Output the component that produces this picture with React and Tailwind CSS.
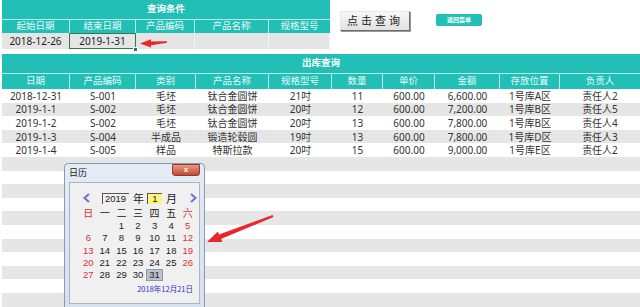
import React from "react";

const TEAL = "bg-[#21bfb6]";

const queryCols = [
  { label: "起始日期", w: "w-[68px]", value: "2018-12-26" },
  { label: "结束日期", w: "w-[66px]", value: "2019-1-31", selected: true },
  { label: "产品编码", w: "w-[59px]", value: "" },
  { label: "产品名称", w: "w-[74px]", value: "" },
  { label: "规格型号", w: "w-[61px]", value: "" },
];

const cols = [
  { label: "日期", w: "w-[68px]" },
  { label: "产品编码", w: "w-[66px]" },
  { label: "类别", w: "w-[60px]" },
  { label: "产品名称", w: "w-[73px]" },
  { label: "规格型号", w: "w-[63px]" },
  { label: "数量", w: "w-[51px]" },
  { label: "单价", w: "w-[52px]" },
  { label: "金额", w: "w-[65px]" },
  { label: "存放位置", w: "w-[60px]" },
  { label: "负责人", w: "w-[80px]" },
];

const rows = [
  ["2018-12-31", "S-001", "毛坯", "钛合金圆饼", "21吋", "11", "600.00", "6,600.00", "1号库A区", "责任人2"],
  ["2019-1-1", "S-002", "毛坯", "钛合金圆饼", "20吋", "12", "600.00", "7,200.00", "1号库B区", "责任人5"],
  ["2019-1-2", "S-002", "毛坯", "钛合金圆饼", "20吋", "13", "600.00", "7,800.00", "1号库B区", "责任人4"],
  ["2019-1-3", "S-004", "半成品", "锻造轮毂圆", "19吋", "13", "600.00", "7,800.00", "1号库D区", "责任人3"],
  ["2019-1-4", "S-005", "样品", "特斯拉款", "20吋", "15", "600.00", "9,000.00", "1号库E区", "责任人2"],
];

const emptyRows = Array.from({ length: 11 });

const weekdays = ["日", "一", "二", "三", "四", "五", "六"];
const days = [null, null, ...Array.from({ length: 31 }, (_, i) => i + 1)];

function Calendar() {
  return (
    <div className="absolute left-[64px] top-[163px] w-[141px] h-[146px] rounded-t-[4px] border border-[#8a9ab0] bg-gradient-to-b from-[#e4ecf5] to-[#d6e1ee]">
      <div className="absolute left-[4px] top-[4px] text-[9px] leading-[10px] text-[#222] font-['Noto_Sans_CJK_SC',sans-serif]">
        日历
      </div>
      <div className="absolute right-[4px] top-[0px] w-[28px] h-[12px] rounded-b-[3px] border border-[#8b3a2e] bg-gradient-to-b from-[#e49a88] to-[#c7452e] flex items-center justify-center text-white text-[8px] font-bold leading-none font-['Liberation_Sans',sans-serif]">
        x
      </div>
      <div className="absolute left-[4px] top-[18px] w-[131px] h-[122px] border border-[#a8b6c6] bg-[#f0f0f0]">
        {/* nav row */}
        <div className="flex items-center h-[12px] mt-[9px] text-[#222] font-['Liberation_Sans',sans-serif]">
          <svg className="ml-[13px]" width="7" height="10" viewBox="0 0 7 10">
            <polyline points="6,1 1.5,5 6,9" fill="none" stroke="#6b6fd6" strokeWidth="2" />
          </svg>
          <div className="ml-[12px] w-[27px] h-[11px] border-t border-l border-[#555] border-r-[#ddd] border-b-[#ddd] text-[9.5px] leading-[10px] pl-[2px]">
            2019
          </div>
          <div className="ml-[4px] text-[11px] leading-[12px] font-['Noto_Sans_CJK_SC',sans-serif]">年</div>
          <div className="ml-[3px] w-[15px] h-[11px] border-t border-l border-[#555] bg-[#fbf67a] text-[9.5px] leading-[10px] text-center">
            1
          </div>
          <div className="ml-[4px] text-[11px] leading-[12px] font-['Noto_Sans_CJK_SC',sans-serif]">月</div>
          <svg className="ml-[13px]" width="7" height="10" viewBox="0 0 7 10">
            <polyline points="1,1 5.5,5 1,9" fill="none" stroke="#6b6fd6" strokeWidth="2" />
          </svg>
        </div>
        {/* grid */}
        <div className="ml-[10px] mt-[3px] w-[116px] grid grid-cols-7">
          {weekdays.map((d, i) => (
            <div
              key={d}
              className={`h-[12.4px] flex items-center justify-center text-[10px] leading-none font-['Noto_Sans_CJK_SC',sans-serif] ${
                i === 0 || i === 6 ? "text-[#d8323a]" : "text-[#222]"
              }`}
            >
              {d}
            </div>
          ))}
          {days.map((d, i) => {
            const col = i % 7;
            const red = col === 0 || col === 6;
            return (
              <div
                key={i}
                className={`h-[12.4px] flex items-center justify-center text-[9.5px] leading-none font-['Liberation_Sans',sans-serif] ${
                  red ? "text-[#d8323a]" : "text-[#222]"
                } ${d === 31 ? "bg-[#b9c3cc] border border-[#8d9aa6]" : ""}`}
              >
                {d}
              </div>
            );
          })}
        </div>
        <div className="absolute right-[6px] top-[101px] text-[7.5px] leading-[9px] text-[#2b2bd0] font-['Noto_Sans_CJK_SC',sans-serif]">
          2018年12月21日
        </div>
      </div>
    </div>
  );
}

export default function App() {
  return (
    <div className="relative w-[640px] h-[307px] overflow-hidden bg-white pl-[2px] font-['Noto_Sans','Noto_Sans_CJK_SC',sans-serif] text-[#333]">
      {/* query area */}
      <div className="flex">
        <div className="w-[328px]">
          <div className={`${TEAL} h-[19px] flex items-center justify-center text-white text-[9.5px] font-bold`}>
            查询条件
          </div>
          <div className={`${TEAL} h-[14px] flex border-t border-white/70`}>
            {queryCols.map((c) => (
              <div
                key={c.label}
                className={`${c.w} h-full flex items-center justify-center text-[9.5px] text-[#eafaf8] border-r border-white/70 last:border-r-0`}
              >
                {c.label}
              </div>
            ))}
          </div>
          <div className="h-[16px] flex bg-[#e5e5e5]">
            {queryCols.map((c) => (
              <div
                key={c.label}
                className={`${c.w} relative h-full flex items-center justify-center text-[10px] text-[#222] border-r border-[#f3f3f3]`}
              >
                {c.value}
                {c.selected && (
                  <>
                    <div className="absolute left-[-1px] top-0 right-[-1px] bottom-0 border-[1.5px] border-[#2f7a4a]" />
                    <div className="absolute right-[-3px] bottom-[-3px] w-[5px] h-[5px] bg-[#2f7a4a] border border-white" />
                  </>
                )}
              </div>
            ))}
          </div>
        </div>
        <div className="ml-[10px] mt-[11px] w-[70px] h-[20px] border border-t-[#e8e8e8] border-l-[#e8e8e8] border-r-[#6d6d6d] border-b-[#6d6d6d] bg-gradient-to-b from-[#f7f7f7] to-[#e2e2e2] flex items-center justify-center text-[11px] tracking-[3px] text-[#222] shadow-[1px_1px_0_#9a9a9a]">
          点击查询
        </div>
        <div className={`ml-[26px] mt-[14px] w-[46px] h-[12px] rounded-[2px] ${TEAL} flex items-center justify-center text-white text-[6px] font-bold leading-none`}>
          返回菜单
        </div>
      </div>

      {/* main table */}
      <div className={`${TEAL} mt-[5px] h-[20px] flex items-center justify-center text-white text-[9.5px] font-bold border-b border-white/70`}>
        出库查询
      </div>
      <div className={`${TEAL} h-[15px] flex`}>
        {cols.map((c) => (
          <div
            key={c.label}
            className={`${c.w} h-full flex items-center justify-center text-[9.5px] text-[#eafaf8] border-r border-white/70 last:border-r-0`}
          >
            {c.label}
          </div>
        ))}
      </div>
      {rows.map((r, i) => (
        <div key={i} className={`h-[13.6px] flex ${i % 2 === 1 ? "bg-[#e6e6e6]" : "bg-white"}`}>
          {r.map((v, j) => (
            <div key={j} className={`${cols[j].w} h-full flex items-center justify-center text-[10px] leading-none`}>
              {v}
            </div>
          ))}
        </div>
      ))}
      {emptyRows.map((_, i) => (
        <div key={i} className={`h-[13.6px] ${(i + 5) % 2 === 1 ? "bg-[#e6e6e6]" : "bg-white"}`} />
      ))}

      <Calendar />

      {/* red arrows */}
      <svg className="absolute left-0 top-0 pointer-events-none" width="640" height="307">
        <polygon
          points="167,41.2 151,41.4 151,39.2 140,43.6 151,47.6 151,45.2 167,42.8"
          fill="#e8262b"
        />
        <polygon
          points="272.6,215 219,234.6 217.8,231.6 207,242 222.2,242 221,239 273.4,217"
          fill="#e8262b"
        />
      </svg>
    </div>
  );
}
